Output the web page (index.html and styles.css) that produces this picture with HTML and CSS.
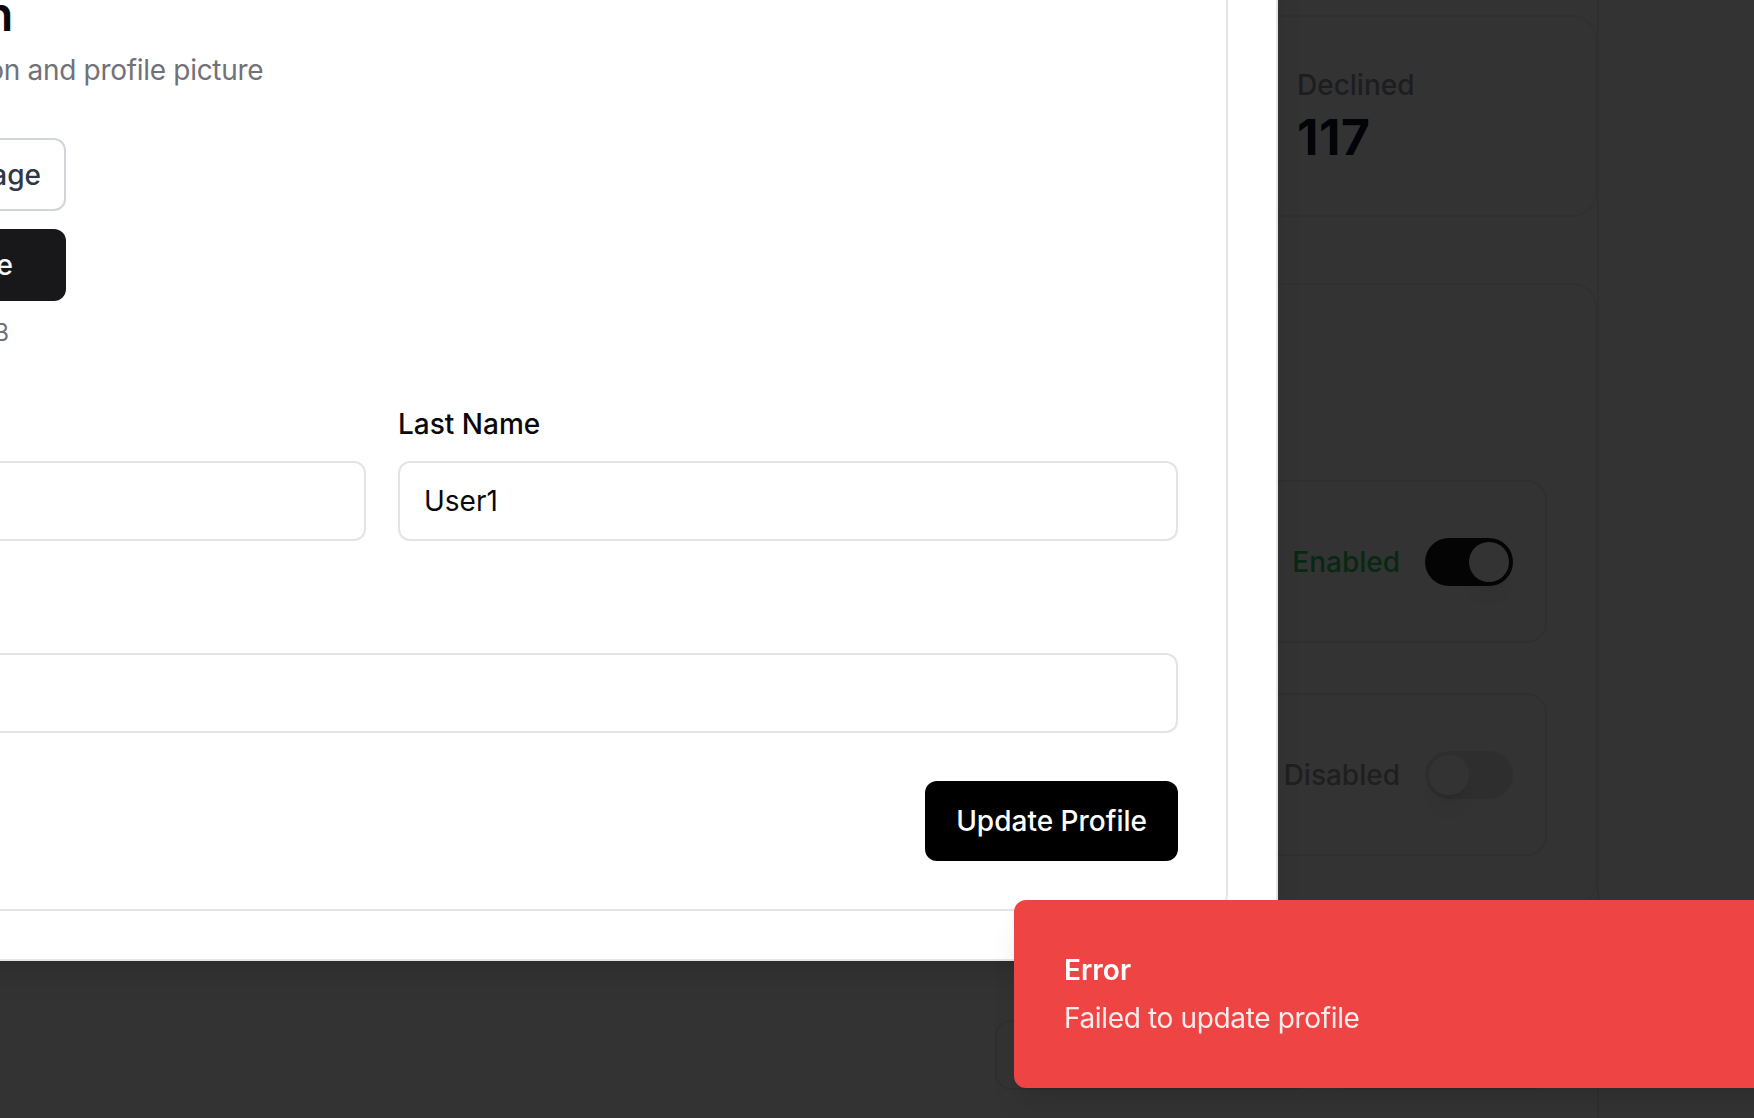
FILE: index.html
```html
<!DOCTYPE html>
<html lang="en">
<head>
<meta charset="utf-8">
<title>Profile</title>
<link rel="stylesheet" href="styles.css">
</head>
<body>
<div class="page">
  <main class="main">
    <section class="stats">
      <div class="stat"><p class="stat-label">Total</p><p class="stat-value">1,204</p></div>
      <div class="stat"><p class="stat-label">Pending</p><p class="stat-value">86</p></div>
      <div class="stat"><p class="stat-label">Approved</p><p class="stat-value">1,001</p></div>
      <div class="stat"><p class="stat-label">Declined</p><p class="stat-value">117</p></div>
    </section>
    <section class="settings">
      <div class="settings-head">
        <h3 class="settings-title">Notifications</h3>
        <p class="settings-sub">Manage your preferences</p>
      </div>
      <div class="setting">
        <div class="setting-info">
          <p class="setting-name">Email alerts</p>
          <p class="setting-desc">Receive updates by email</p>
        </div>
        <div class="setting-ctl">
          <span class="status status-on">Enabled</span>
          <span class="switch switch-on"><span class="knob"></span></span>
        </div>
      </div>
      <div class="setting setting-gap">
        <div class="setting-info">
          <p class="setting-name">SMS alerts</p>
          <p class="setting-desc">Receive updates by SMS</p>
        </div>
        <div class="setting-ctl">
          <span class="status status-off">Disabled</span>
          <span class="switch"><span class="knob"></span></span>
        </div>
      </div>
    </section>
    <div class="setting-footer">
      <button class="ghost ghost-wide">Reset</button>
      <button class="ghost ghost-narrow">Save</button>
    </div>
  </main>
  <aside class="side"></aside>
</div>

<div class="overlay"></div>

<div class="dialog">
  <div class="card">
    <div class="card-header">
      <h2 class="card-title">Profile Information</h2>
      <p class="card-desc">Update your personal information and profile picture</p>
    </div>
    <div class="card-content">
      <div class="avatar-row">
        <div class="avatar">TU</div>
        <div class="avatar-actions">
          <button class="btn btn-outline">Upload New Image</button>
          <button class="btn btn-dark">Remove Image</button>
          <p class="hint">JPG, PNG up to 5MB</p>
        </div>
      </div>
      <div class="name-grid">
        <div class="field">
          <label class="label" for="fn">First Name</label>
          <input class="input" id="fn" value="Test">
        </div>
        <div class="field">
          <label class="label" for="ln">Last Name</label>
          <input class="input" id="ln" value="User1">
        </div>
      </div>
      <div class="field field-email">
        <label class="label" for="em">Email</label>
        <input class="input" id="em" value="">
      </div>
      <div class="actions">
        <button class="btn-primary">Update Profile</button>
      </div>
    </div>
  </div>
</div>

<div class="toast" role="alert">
  <div class="toast-title">Error</div>
  <div class="toast-desc">Failed to update profile</div>
</div>
</body>
</html>
```

FILE: styles.css
```css
* { box-sizing: border-box; }
html, body {
  margin: 0;
  padding: 0;
  width: 100%;
  height: 100%;
  overflow: hidden;
}
body {
  font-family: Inter, "Noto Sans", "Liberation Sans", sans-serif;
  background: #ffffff;
  color: #09090b;
}
p, h2, h3 { margin: 0; }
button { font-family: inherit; }

/* ---------- background page ---------- */
.page {
  display: flex;
  min-height: 100vh;
}
.main {
  width: 1496px;
  margin-left: 101px;
  padding-top: 15px;
  flex: none;
}
.side {
  flex: 1;
  border-left: 2px solid #ececec;
  background: #fcfcfc;
}
.stats {
  display: grid;
  grid-template-columns: repeat(4, 350px);
  gap: 32px;
}
.stat {
  border: 2px solid #efefef;
  border-radius: 24px;
  padding: 48px 48px 46px;
  background: #fff;
}
.stat-label {
  font-size: 28px;
  line-height: 40px;
  font-weight: 500;
  color: #8f93a0;
}
.stat-value {
  font-size: 50px;
  line-height: 64px;
  font-weight: 700;
  letter-spacing: 0.5px;
  color: #111827;
}
.settings {
  margin-top: 66px;
  border: 2px solid #efefef;
  border-radius: 24px;
  padding: 48px;
  background: #fff;
}
.settings-head {
  height: 99px;
  margin-bottom: 48px;
}
.settings-title {
  font-size: 36px;
  line-height: 48px;
  font-weight: 600;
}
.settings-sub {
  margin-top: 8px;
  font-size: 28px;
  line-height: 40px;
  color: #71717a;
}
.setting {
  display: flex;
  align-items: center;
  justify-content: space-between;
  height: 163px;
  padding: 0 32px;
  border: 2px solid #ebebeb;
  border-radius: 20px;
}
.setting-gap { margin-top: 50px; }
.setting-name {
  font-size: 30px;
  line-height: 44px;
  font-weight: 600;
}
.setting-desc {
  font-size: 26px;
  line-height: 36px;
  color: #71717a;
}
.setting-ctl {
  display: flex;
  align-items: center;
  gap: 25px;
}
.status {
  font-size: 28px;
  line-height: 40px;
  font-weight: 500;
}
.status-on { color: #2ac864; }
.status-off { color: #9a9a9a; }
.switch {
  display: inline-flex;
  align-items: center;
  width: 88px;
  height: 48px;
  border: 4px solid transparent;
  border-radius: 999px;
  background: #e6e6e6;
}
.switch-on { background: #18181b; }
.knob {
  width: 40px;
  height: 40px;
  border-radius: 50%;
  background: #fff;
  box-shadow: 0 20px 30px -6px rgba(0, 0, 0, 0.12), 0 8px 12px -8px rgba(0, 0, 0, 0.12);
}
.switch-on .knob { transform: translateX(40px); }
.setting-footer {
  display: flex;
  justify-content: flex-end;
  gap: 24px;
  padding-right: 50px;
  margin-top: 114px;
}
.ghost {
  height: 70px;
  border: 2px solid #ebebeb;
  border-radius: 16px;
  background: #fff;
  font-size: 28px;
  color: #18181b;
}
.ghost-wide { width: 315px; }
.ghost-narrow { width: 213px; }

/* ---------- overlay + dialog ---------- */
.overlay {
  position: fixed;
  inset: 0;
  background: rgba(0, 0, 0, 0.8);
}
.dialog {
  position: fixed;
  left: -514px;
  right: 476px;
  bottom: 157px;
  background: #fff;
  border: 2px solid #e4e4e7;
  border-radius: 16px;
  padding: 48px;
  box-shadow: 0 20px 30px -6px rgba(0, 0, 0, 0.1), 0 8px 12px -8px rgba(0, 0, 0, 0.1);
}
.card {
  border: 2px solid #e4e4e7;
  border-radius: 16px;
  background: #fff;
}
.card-header {
  display: flex;
  flex-direction: column;
  gap: 12px;
  padding: 48px;
}
.card-title {
  font-size: 48px;
  line-height: 48px;
  font-weight: 600;
  letter-spacing: -0.18px;
  color: #09090b;
}
.card-desc {
  font-size: 28px;
  line-height: 40px;
  letter-spacing: -0.3px;
  color: #71717a;
}
.card-content {
  padding: 0 48px 48px;
}
.avatar-row {
  display: flex;
  align-items: flex-start;
  gap: 17px;
}
.avatar {
  width: 160px;
  height: 160px;
  border-radius: 50%;
  background: #f4f4f5;
  display: flex;
  align-items: center;
  justify-content: center;
  font-size: 48px;
  color: #71717a;
}
.avatar-actions {
  width: 303px;
  display: flex;
  flex-direction: column;
}
.btn {
  display: flex;
  align-items: center;
  justify-content: center;
  width: 100%;
  border-radius: 12px;
  font-size: 28px;
  font-weight: 500;
  padding: 0;
}
.btn-outline {
  height: 73px;
  background: #fff;
  border: 2px solid #d1d5db;
  color: #2d3748;
}
.btn-dark {
  height: 72px;
  margin-top: 18px;
  background: #18181b;
  border: none;
  color: #fafafa;
}
.hint {
  margin-top: 16px;
  padding-left: 11px;
  font-size: 24px;
  line-height: 32px;
  color: #6b7280;
}
.name-grid {
  display: grid;
  grid-template-columns: 1fr 1fr;
  gap: 32px;
  margin-top: 61px;
}
.field {
  display: flex;
  flex-direction: column;
}
.field-email { margin-top: 61px; }
.label {
  font-size: 28px;
  line-height: 28px;
  font-weight: 500;
  color: #09090b;
  margin-bottom: 23px;
}
.input {
  height: 80px;
  width: 100%;
  border: 2px solid #e4e4e7;
  border-radius: 12px;
  padding: 0 24px;
  font-family: inherit;
  font-size: 28px;
  color: #09090b;
  background: #fff;
  outline: none;
}
.actions {
  display: flex;
  justify-content: flex-end;
  margin-top: 48px;
}
.btn-primary {
  height: 80px;
  padding: 0 31px;
  border: none;
  border-radius: 12px;
  background: #000;
  color: #fff;
  font-size: 28px;
  font-weight: 500;
}

/* ---------- toast ---------- */
.toast {
  position: fixed;
  left: 1014px;
  top: 900px;
  width: 840px;
  padding: 48px 64px 48px 48px;
  display: grid;
  gap: 8px;
  background: #ef4444;
  border: 2px solid #ef4444;
  border-radius: 12px;
  color: #fff;
  box-shadow: 0 20px 30px -6px rgba(0, 0, 0, 0.1), 0 8px 12px -8px rgba(0, 0, 0, 0.1);
}
.toast-title {
  font-size: 28px;
  line-height: 40px;
  font-weight: 600;
}
.toast-desc {
  font-size: 28px;
  line-height: 40px;
  letter-spacing: -0.35px;
  opacity: 0.9;
}
```
